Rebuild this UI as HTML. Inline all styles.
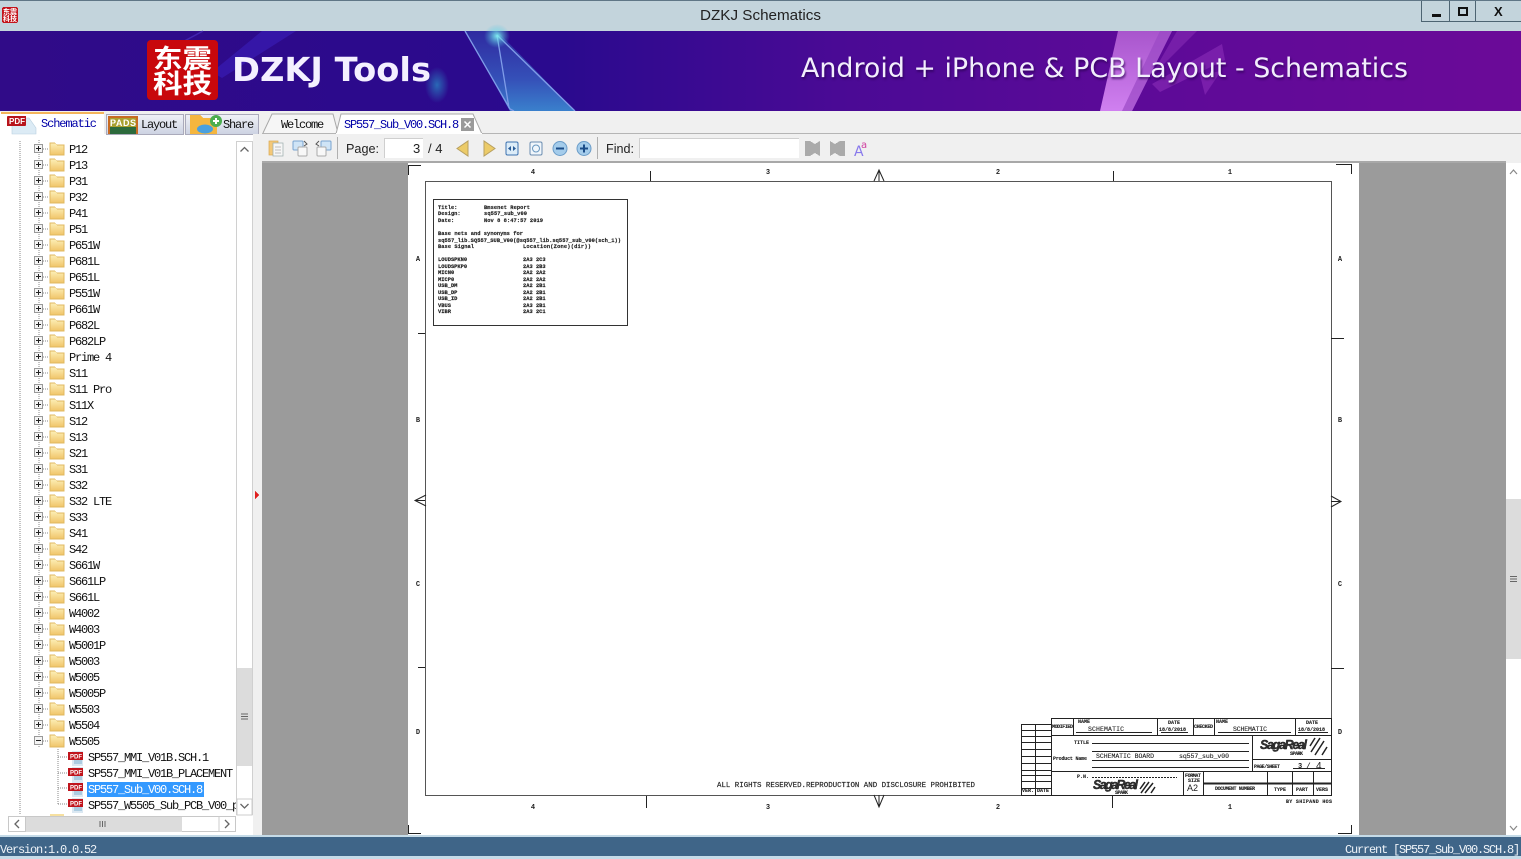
<!DOCTYPE html>
<html><head><meta charset="utf-8"><title>DZKJ Schematics</title>
<style>
html,body{margin:0;padding:0;background:#f0f0f0;overflow:hidden}
svg{display:block}
.t{font:12px "Liberation Mono","Noto Sans CJK SC",monospace;letter-spacing:-1.2px;fill:#111}
.u{font:13px "Liberation Sans",sans-serif;fill:#222}
.s{font:bold 5.4px "Liberation Mono",monospace;fill:#222;stroke:#222;stroke-width:.15}
.l{font:bold 7px "Liberation Mono",monospace;fill:#222;text-anchor:middle}
.b{font:bold 5px "Liberation Mono",monospace;fill:#222;stroke:#222;stroke-width:.1}
.n{font:6.5px "Liberation Mono",monospace;fill:#222;stroke:#222;stroke-width:.1}
.g{font:italic bold 12.5px "Liberation Sans",sans-serif;fill:#333;stroke:#111;stroke-width:.4}
</style></head><body>
<svg xmlns="http://www.w3.org/2000/svg" width="1521" height="859" viewBox="0 0 1521 859" shape-rendering="crispEdges">
<defs>
<linearGradient id="ban" x1="0" x2="1" y1="0" y2="0"><stop offset="0" stop-color="#300b88"/><stop offset=".37" stop-color="#2a0a8e"/><stop offset=".55" stop-color="#4a0a95"/><stop offset=".75" stop-color="#5d0a98"/><stop offset="1" stop-color="#6b0a98"/></linearGradient>
<linearGradient id="fo" x1="0" x2="0" y1="0" y2="1"><stop offset="0" stop-color="#fdf0b8"/><stop offset="1" stop-color="#f0c468"/></linearGradient>
<linearGradient id="tb" x1="0" x2="0" y1="0" y2="1"><stop offset="0" stop-color="#f0f2f7"/><stop offset="1" stop-color="#ccd2e2"/></linearGradient>
<linearGradient id="bl" x1="0" x2="0" y1="0" y2="1"><stop offset="0" stop-color="#2f2aa0"/><stop offset=".6" stop-color="#3550b8"/><stop offset="1" stop-color="#3a80cc"/></linearGradient>
<linearGradient id="pk" x1="0" x2="0" y1="0" y2="1"><stop offset="0" stop-color="#a855cc"/><stop offset="1" stop-color="#d080f0"/></linearGradient>
<radialGradient id="gl"><stop offset="0" stop-color="#80f0f0" stop-opacity=".95"/><stop offset="1" stop-color="#50c0e0" stop-opacity="0"/></radialGradient>
<radialGradient id="gb"><stop offset="0" stop-color="#2a80c0" stop-opacity=".8"/><stop offset="1" stop-color="#2a80c0" stop-opacity="0"/></radialGradient>
<g id="r">
<path d="M39 -9V7M43 0H49" stroke="#888" stroke-dasharray="1 1" fill="none"/>
<rect x="34.500" y="-4.500" width="8" height="8" fill="#f4f4f4" stroke="#999"/>
<path d="M36 -.5H41M38.500 -3V2" stroke="#222"/>
<path d="M50 -6h5l2 2h7v10h-14z" fill="url(#fo)" stroke="#e0b860" stroke-width=".6"/>
</g>
<g id="p">
<path d="M58 0H68" stroke="#888" stroke-dasharray="1 1"/>
<rect x="72" y="-6" width="11" height="15" fill="#dbe8f2"/>
<path d="M74 4h8M74 6h8" stroke="#7db0d0"/>
<rect x="68" y="-5" width="15" height="8" fill="#c0141c"/>
<text x="70" y="1.500" font-family="Liberation Sans" font-size="6" font-weight="bold" fill="#fff">PDF</text>
</g>
</defs>

<rect width="1521" height="859" fill="#f0f0f0"/>
<!-- title bar -->
<rect width="1521" height="31" fill="#c3d4dc"/>
<rect width="1521" height="1" fill="#5f7686"/>
<rect x="2" y="7" width="16" height="16" rx="2" fill="#c4141c"/>
<text x="3" y="14" font-family="Noto Sans CJK SC" font-size="7" fill="#fff" font-weight="bold">东震</text>
<text x="3" y="21" font-family="Noto Sans CJK SC" font-size="7" fill="#fff" font-weight="bold">科技</text>
<text x="700" y="20" font-family="Liberation Sans" font-size="15" fill="#222" textLength="121" lengthAdjust="spacingAndGlyphs">DZKJ Schematics</text>
<path d="M1421.500 1V21.500H1521M1449.500 1V21.500M1475.500 1V21.500" fill="none" stroke="#4d6472"/>
<rect x="1432" y="14" width="9" height="3" fill="#111"/>
<rect x="1459" y="8" width="8" height="7" fill="none" stroke="#111" stroke-width="2"/>
<text x="1494" y="16" font-family="Liberation Sans" font-size="13" font-weight="bold" fill="#111">X</text>

<!-- banner -->
<g shape-rendering="auto">
<rect y="31" width="1521" height="80" fill="url(#ban)"/>
<path d="M212 72L262 31H296L222 78Z" fill="#3c20c0" opacity=".55"/>
<path d="M177 45L203 31" stroke="#4a30c0" stroke-width="1.500" opacity=".7"/>
<ellipse cx="437" cy="85" rx="12" ry="18" fill="url(#gb)"/>
<path d="M465 31H497L575 111H510Z" fill="url(#bl)"/>
<path d="M465 31L510 109L514 111M497 35L575 111M497 35L509 108" stroke="#7f9ce8" stroke-width="1.300" fill="none"/>
<ellipse cx="497" cy="36" rx="13" ry="12" fill="url(#gl)"/>
<path d="M1118 31H1172L1132 111H1100Z" fill="url(#pk)"/>
<path d="M1160 31H1172L1132 111H1122Z" fill="#9a48c4" opacity=".7"/>
<path d="M1177 31H1197L1150 78Z" fill="#8a30b8" opacity=".55"/>
<path d="M1222 44L1225 60L1160 92L1152 84Z" fill="#8428b4" opacity=".7"/>
<path d="M1200 75L1221 71L1205 95Z" fill="#8a2cb8" opacity=".6"/>
<rect x="147" y="40" width="71" height="60" rx="4" fill="#c8080c"/>
<text x="153" y="68" font-family="Noto Sans CJK SC" font-size="26" font-weight="bold" fill="#fff" textLength="59" lengthAdjust="spacingAndGlyphs">东震</text>
<text x="153" y="93" font-family="Noto Sans CJK SC" font-size="26" font-weight="bold" fill="#fff" textLength="59" lengthAdjust="spacingAndGlyphs">科技</text>
<text x="232" y="81" font-family="DejaVu Sans" font-size="33" font-weight="bold" fill="#f4f0ff" textLength="199" lengthAdjust="spacingAndGlyphs">DZKJ Tools</text>
<text x="801" y="77" font-family="DejaVu Sans" font-size="27" fill="#f2eefc" textLength="607" lengthAdjust="spacingAndGlyphs" style="filter:drop-shadow(1px 2px 1px rgba(40,0,80,.7))">Android + iPhone &amp; PCB Layout - Schematics</text>
</g>

<!-- tab strip -->
<rect y="111" width="1521" height="23" fill="#f0f0f0"/>
<rect y="133" x="262" width="1259" height="1" fill="#b5b5b5"/>
<rect x="0" y="134" width="261" height="702" fill="#fff"/>
<rect x="0" y="112" width="104" height="24" fill="#fff"/>
<rect x="1" y="112" width="103" height="2" fill="#f4b45a"/>
<rect x="106.500" y="114.500" width="77" height="20" fill="url(#tb)" stroke="#aab"/>
<rect x="185.500" y="114.500" width="73" height="20" fill="url(#tb)" stroke="#aab"/>
<path d="M12 118h17l7 10v6H12z" fill="#dcebf5" stroke="#b8d0e0" stroke-width=".6" shape-rendering="auto"/>
<rect x="7" y="116" width="19" height="10" rx="1" fill="#b8141c"/>
<text x="9" y="124" font-family="Liberation Sans" font-size="8" font-weight="bold" fill="#fff">PDF</text>
<rect x="108" y="116" width="30" height="18" fill="#c86a22"/>
<rect x="110" y="118" width="26" height="16" fill="#a8a030"/>
<rect x="110" y="127" width="26" height="7" fill="#2c6a3c"/>
<text x="110" y="126" font-family="Liberation Sans" font-size="9" font-weight="bold" fill="#fff" textLength="26">PADS</text>
<path d="M190 115h10l3 3h14v16h-27z" fill="#f5b63e"/>
<ellipse cx="205" cy="129" rx="8" ry="4.500" fill="#4aa0de" shape-rendering="auto"/>
<circle cx="216" cy="121" r="6" fill="#4cae50" shape-rendering="auto"/>
<path d="M213 121h6M216 118v6" stroke="#fff" stroke-width="2"/>
<text class="t" x="41" y="127" style="fill:#0000a8;letter-spacing:-1.100px">Schematic</text>
<text class="t" x="141" y="128">Layout</text>
<text class="t" x="223" y="128">Share</text>
<g shape-rendering="auto">
<path d="M263 133L272 114H333L338 133" fill="#f6f6f6" stroke="#a8a8a8"/>
<path d="M336 134L341 114H473L482 134Z" fill="#fff" stroke="#a8a8a8"/>
</g>
<rect x="336" y="133" width="146" height="1" fill="#fff"/>
<text class="t" x="281" y="128">Welcome</text>
<text class="t" x="344" y="128" style="fill:#0000a8">SP557_Sub_V00.SCH.8</text>
<rect x="461" y="118" width="13" height="13" fill="#9a9a9a"/>
<path d="M464.500 121.500l6 6m0-6l-6 6" stroke="#fff" stroke-width="1.500" shape-rendering="auto"/>

<!-- tree -->
<path d="M20 141V815" stroke="#888" stroke-dasharray="1 1"/>
<use href="#r" y="149"/><text class="t" x="69" y="153">P12</text>
<use href="#r" y="165"/><text class="t" x="69" y="169">P13</text>
<use href="#r" y="181"/><text class="t" x="69" y="185">P31</text>
<use href="#r" y="197"/><text class="t" x="69" y="201">P32</text>
<use href="#r" y="213"/><text class="t" x="69" y="217">P41</text>
<use href="#r" y="229"/><text class="t" x="69" y="233">P51</text>
<use href="#r" y="245"/><text class="t" x="69" y="249">P651W</text>
<use href="#r" y="261"/><text class="t" x="69" y="265">P681L</text>
<use href="#r" y="277"/><text class="t" x="69" y="281">P651L</text>
<use href="#r" y="293"/><text class="t" x="69" y="297">P551W</text>
<use href="#r" y="309"/><text class="t" x="69" y="313">P661W</text>
<use href="#r" y="325"/><text class="t" x="69" y="329">P682L</text>
<use href="#r" y="341"/><text class="t" x="69" y="345">P682LP</text>
<use href="#r" y="357"/><text class="t" x="69" y="361">Prime 4</text>
<use href="#r" y="373"/><text class="t" x="69" y="377">S11</text>
<use href="#r" y="389"/><text class="t" x="69" y="393">S11 Pro</text>
<use href="#r" y="405"/><text class="t" x="69" y="409">S11X</text>
<use href="#r" y="421"/><text class="t" x="69" y="425">S12</text>
<use href="#r" y="437"/><text class="t" x="69" y="441">S13</text>
<use href="#r" y="453"/><text class="t" x="69" y="457">S21</text>
<use href="#r" y="469"/><text class="t" x="69" y="473">S31</text>
<use href="#r" y="485"/><text class="t" x="69" y="489">S32</text>
<use href="#r" y="501"/><text class="t" x="69" y="505">S32 LTE</text>
<use href="#r" y="517"/><text class="t" x="69" y="521">S33</text>
<use href="#r" y="533"/><text class="t" x="69" y="537">S41</text>
<use href="#r" y="549"/><text class="t" x="69" y="553">S42</text>
<use href="#r" y="565"/><text class="t" x="69" y="569">S661W</text>
<use href="#r" y="581"/><text class="t" x="69" y="585">S661LP</text>
<use href="#r" y="597"/><text class="t" x="69" y="601">S661L</text>
<use href="#r" y="613"/><text class="t" x="69" y="617">W4002</text>
<use href="#r" y="629"/><text class="t" x="69" y="633">W4003</text>
<use href="#r" y="645"/><text class="t" x="69" y="649">W5001P</text>
<use href="#r" y="661"/><text class="t" x="69" y="665">W5003</text>
<use href="#r" y="677"/><text class="t" x="69" y="681">W5005</text>
<use href="#r" y="693"/><text class="t" x="69" y="697">W5005P</text>
<use href="#r" y="709"/><text class="t" x="69" y="713">W5503</text>
<use href="#r" y="725"/><text class="t" x="69" y="729">W5504</text>
<use href="#r" y="741"/><text class="t" x="69" y="745">W5505</text>
<rect x="36" y="737" width="5" height="7" fill="#f4f4f4"/>
<path d="M36 740.500H41" stroke="#222"/>
<path d="M58 749V805" stroke="#888" stroke-dasharray="1 1"/>
<use href="#p" y="757"/><text class="t" x="88" y="761">SP557_MMI_V01B.SCH.1</text>
<use href="#p" y="773"/><text class="t" x="88" y="777">SP557_MMI_V01B_PLACEMENT</text>
<use href="#p" y="788"/>
<rect x="87" y="782" width="117" height="15" fill="#3399ff"/>
<text class="t" x="88" y="793" style="fill:#fff">SP557_Sub_V00.SCH.8</text>
<use href="#p" y="804"/><text class="t" x="88" y="809">SP557_W5505_Sub_PCB_V00_p</text>
<rect x="237" y="797" width="16" height="18" fill="#fff"/>
<rect x="0" y="815" width="260" height="21" fill="#fff"/>
<rect x="50" y="814" width="14" height="2" fill="#f6e0a0"/>

<!-- tree scrollbars -->
<rect x="236.500" y="141.500" width="16" height="673" fill="#f0f0f0" stroke="#d0d0d0"/>
<rect x="237" y="142" width="15" height="16" fill="#fff"/>
<rect x="237" y="158" width="15" height="510" fill="#fff"/>
<path d="M240.500 151.500l4-4 4 4" fill="none" stroke="#666" stroke-width="1.300" shape-rendering="auto"/>
<rect x="237" y="668" width="15" height="98" fill="#dcdcdc"/>
<rect x="237" y="766" width="15" height="33" fill="#fff"/>
<path d="M241 714h7M241 716.500h7M241 719h7" stroke="#666"/>
<rect x="237" y="799" width="15" height="16" fill="#fff" stroke="#ccc"/>
<path d="M240.500 804l4 4 4-4" fill="none" stroke="#666" stroke-width="1.300" shape-rendering="auto"/>
<rect x="8.500" y="816.500" width="227" height="15" fill="#fff" stroke="#c8c8c8"/>
<rect x="25" y="817" width="157" height="15" fill="#dcdcdc"/>
<path d="M19 820l-4 4 4 4M225 820l4 4-4 4" fill="none" stroke="#666" stroke-width="1.300" shape-rendering="auto"/>
<path d="M100 821v6M102.500 821v6M105 821v6" stroke="#666"/>
<rect x="218.500" y="816.500" width="1" height="15" fill="#ccc"/>
<rect x="25" y="817" width="1" height="15" fill="#c8c8c8"/>

<!-- splitter -->
<rect x="253" y="134" width="8" height="702" fill="#f0f0f0"/>
<path d="M255 491l4 4-4 4z" fill="#e02020"/>

<!-- toolbar -->
<rect x="262" y="134" width="1259" height="28" fill="#f0f0f0"/>
<g shape-rendering="auto">
<rect x="269" y="141" width="9" height="14" fill="#f4c878" stroke="#d8a850" stroke-width=".7"/>
<rect x="273" y="143" width="10" height="13" fill="#f6f6f6" stroke="#9aa" stroke-width=".7"/>
<path d="M275 147h6M275 150h6M275 153h6" stroke="#aaa" stroke-width=".7"/>
<rect x="293" y="141" width="10" height="9" rx="1" fill="#cfe4f6" stroke="#7aa4d0"/>
<rect x="298" y="147" width="9" height="9" rx="1" fill="#f8f8f8" stroke="#aaa"/>
<path d="M304 141l3 3-3 2" fill="none" stroke="#555"/>
<rect x="321" y="141" width="10" height="9" rx="1" fill="#cfe4f6" stroke="#7aa4d0"/>
<rect x="317" y="147" width="9" height="9" rx="1" fill="#f8f8f8" stroke="#aaa"/>
<path d="M319 141l-3 3 3 2" fill="none" stroke="#555"/>
</g>
<rect x="337" y="137" width="1" height="22" fill="#b0b0b0"/>
<text class="u" x="346" y="153" textLength="33" lengthAdjust="spacingAndGlyphs">Page:</text>
<rect x="384" y="138" width="39" height="20" fill="#fff"/>
<rect x="384" y="138" width="39" height="1" fill="#cfcfcf"/>
<rect x="384" y="138" width="1" height="20" fill="#cfcfcf"/>
<text class="u" x="413" y="153">3</text>
<text class="u" x="428" y="153">/ 4</text>
<g shape-rendering="auto">
<path d="M468 141V156L457 148.500Z" fill="#eccb68" stroke="#b8a060"/>
<path d="M484 141V156L495 148.500Z" fill="#eccb68" stroke="#b8a060"/>
<rect x="506" y="142" width="12" height="13" rx="1.500" fill="#dcecf8" stroke="#3c72b0"/>
<path d="M511 146l-3 2.500 3 2.500zM513 146l3 2.500-3 2.500z" fill="#2a5c98"/>
<rect x="530" y="142" width="12" height="13" rx="1.500" fill="#f0f6fb" stroke="#6a8cb0"/>
<circle cx="536" cy="148.500" r="3.500" fill="none" stroke="#6a98c0"/>
<circle cx="560" cy="148.500" r="7" fill="#a4cceb" stroke="#6a9cc8"/>
<rect x="556" y="147.500" width="8" height="2" fill="#1a4c88"/>
<circle cx="584" cy="148.500" r="7" fill="#a4cceb" stroke="#6a9cc8"/>
<path d="M580 148.500h8M584 144.500v8" stroke="#1a4c88" stroke-width="2"/>
</g>
<rect x="597" y="137" width="1" height="22" fill="#b0b0b0"/>
<text class="u" x="606" y="153" textLength="28" lengthAdjust="spacingAndGlyphs">Find:</text>
<rect x="639" y="138" width="160" height="20" fill="#fff"/>
<rect x="639" y="138" width="160" height="1" fill="#cfcfcf"/>
<rect x="639" y="138" width="1" height="20" fill="#cfcfcf"/>
<path d="M805 141h5l5 3 5-3v15l-5-3-5 3h-5z" fill="#aaa"/>
<path d="M830 141l5 3 5-3h5v15h-5l-5-3-5 3z" fill="#aaa"/>
<text x="854" y="156" font-family="DejaVu Sans" font-size="14" fill="#8878ec">A</text>
<text x="861" y="148" font-family="DejaVu Sans" font-size="10" fill="#d040a0">a</text>

<!-- viewer -->
<rect x="262" y="162" width="1244" height="673" fill="#9b9b9b"/>
<rect x="262" y="161" width="1244" height="2" fill="#a8a8a8"/>
<rect x="408" y="163" width="951" height="672" fill="#fff"/>
<rect x="1506" y="163" width="15" height="672" fill="#fff"/>
<rect x="1506" y="499" width="15" height="160" fill="#dcdcdc"/>
<path d="M1510 576.500h7M1510 579h7M1510 581.500h7" stroke="#666"/>
<path d="M1510 174l3.500-4 3.500 4M1510 826l3.500 4 3.500-4" fill="none" stroke="#888" stroke-width="1.200" shape-rendering="auto"/>

<!-- sheet -->
<g fill="none" stroke="#222">
<rect x="425.500" y="181.500" width="906" height="614" stroke="#555"/>
<path d="M408.500 175V165.500H421M1336 164.500H1351.500V174M1338 833.500H1351.500V825M408.500 825V833.500H421"/>
<path d="M650.500 171V181M1113.500 171V181M646.500 796V808M1112.500 796V808M418 333.500H425M418 667.500H425M1331 338.500H1344M1331 668.500H1344"/>
</g>
<g fill="none" stroke="#222" shape-rendering="auto">
<path d="M874 181L879 170L884 181M879 170V181"/>
<path d="M874 795L879 807L884 795M879 795V807"/>
<path d="M426 495L415 500.500L426 506M415 500.500H425"/>
<path d="M1331 496L1341 501.500L1331 507M1331 501.500H1341"/>
</g>
<text class="l" x="533" y="174">4</text><text class="l" x="768" y="174">3</text><text class="l" x="998" y="174">2</text><text class="l" x="1230" y="174">1</text>
<text class="l" x="533" y="809">4</text><text class="l" x="768" y="809">3</text><text class="l" x="998" y="809">2</text><text class="l" x="1230" y="809">1</text>
<text class="l" x="418" y="261">A</text><text class="l" x="418" y="422">B</text><text class="l" x="418" y="586">C</text><text class="l" x="418" y="734">D</text>
<text class="l" x="1340" y="261">A</text><text class="l" x="1340" y="422">B</text><text class="l" x="1340" y="586">C</text><text class="l" x="1340" y="734">D</text>

<rect x="433.500" y="199.500" width="194" height="126" fill="#fff" stroke="#333"/>
<text class="s" x="438" y="209">Title:</text><text class="s" x="484" y="209" textLength="46">Bmsenet Report</text>
<text class="s" x="438" y="215">Design:</text><text class="s" x="484" y="215" textLength="43">sq557_sub_v00</text>
<text class="s" x="438" y="222">Date:</text><text class="s" x="484" y="222" textLength="59">Nov 8 8:47:57 2019</text>
<text class="s" x="438" y="235" textLength="85">Base nets and synonyms for</text>
<text class="s" x="438" y="242" textLength="183">sq557_lib.SQ557_SUB_V00(@sq557_lib.sq557_sub_v00(sch_1))</text>
<text class="s" x="438" y="248" textLength="36">Base Signal</text><text class="s" x="523" y="248" textLength="68">Location(Zone)(dir))</text>
<text class="s" x="438" y="261">LOUDSPKN0</text><text class="s" x="523" y="261">2A3 2C3</text>
<text class="s" x="438" y="268">LOUDSPKP0</text><text class="s" x="523" y="268">2A3 2B3</text>
<text class="s" x="438" y="274">MICN0</text><text class="s" x="523" y="274">2A2 2A2</text>
<text class="s" x="438" y="281">MICP0</text><text class="s" x="523" y="281">2A2 2A2</text>
<text class="s" x="438" y="287">USB_DM</text><text class="s" x="523" y="287">2A2 2B1</text>
<text class="s" x="438" y="294">USB_DP</text><text class="s" x="523" y="294">2A2 2B1</text>
<text class="s" x="438" y="300">USB_ID</text><text class="s" x="523" y="300">2A2 2B1</text>
<text class="s" x="438" y="307">VBUS</text><text class="s" x="523" y="307">2A3 2B1</text>
<text class="s" x="438" y="313">VIBR</text><text class="s" x="523" y="313">2A3 2C1</text>

<text x="717" y="787" font-family="Liberation Mono" font-size="7" fill="#222" stroke="#222" stroke-width=".15" textLength="258" lengthAdjust="spacingAndGlyphs">ALL RIGHTS RESERVED.REPRODUCTION AND DISCLOSURE PROHIBITED</text>

<!-- title block -->
<g fill="none" stroke="#222">
<path d="M1051.500 718.500H1331.500V795.500H1021M1021 724.500H1051M1021.500 724.500V795M1035.500 724.500V795M1051.500 718V795"/>
<path d="M1021 730.500H1051M1021 736.500H1051M1021 742.500H1051M1021 749.500H1051M1021 756.500H1051M1021 763.500H1051M1021 770.500H1051M1021 775.500H1051M1021 781.500H1051M1021 788.500H1051"/>
<path d="M1051 735.500H1331M1073.500 718V735M1157.500 718V735M1193.500 718V735M1214.500 718V735M1295.500 718V735"/>
<path d="M1252.500 735V771M1252 759.500H1331M1051 771.500H1331M1183.500 771V795M1203.500 771V795M1267.500 771V795M1292.500 771V795M1313.500 771V795"/>
<path d="M1203 783.500H1331" stroke-width="2"/>
<path d="M1076 732.500H1152M1161 732.500H1188M1218 732.500H1291M1298 732.500H1328"/>
<path d="M1092 743.500H1249M1092 751.500H1249M1092 760.500H1249M1092 767.500H1249"/>
<path d="M1092 777.500H1177" stroke-dasharray="2 1"/>
<path d="M1293 768.500H1325"/>
</g>
<text class="b" x="1052" y="728" textLength="21">MODIFIED</text>
<text class="b" x="1078" y="723">NAME</text>
<text class="n" x="1088" y="731" textLength="36">SCHEMATIC</text>
<text class="b" x="1168" y="724">DATE</text>
<text class="b" x="1159" y="731">18/8/2018</text>
<text class="b" x="1194" y="728" textLength="19">CHECKED</text>
<text class="b" x="1216" y="723">NAME</text>
<text class="n" x="1233" y="731" textLength="34">SCHEMATIC</text>
<text class="b" x="1306" y="724">DATE</text>
<text class="b" x="1298" y="731">18/8/2018</text>
<text class="b" x="1074" y="744">TITLE</text>
<text class="b" x="1053" y="760" textLength="34">Product Name</text>
<text class="n" x="1096" y="758" textLength="58">SCHEMATIC BOARD</text>
<text class="n" x="1179" y="758" textLength="50">sq557_sub_v00</text>
<text class="b" x="1254" y="768" textLength="26">PAGE/SHEET</text>
<text x="1298" y="768" font-family="Liberation Mono" font-size="7" fill="#222" font-weight="bold">3 /</text>
<text x="1316" y="769" font-family="Liberation Sans" font-size="10" fill="#222">4</text>
<text class="b" x="1077" y="778">P.N.</text>
<text class="g" x="1260" y="749" textLength="47">SagaReal</text>
<text class="b" x="1290" y="755" textLength="13">SPARK</text>
<path d="M1315 738l-5 8M1320 738l-9 14M1324 741l-9 14M1327 747l-5 8" stroke="#222" stroke-width="1.500" fill="none" shape-rendering="auto"/>
<text class="g" x="1093" y="789" textLength="45">SagaReal</text>
<text class="b" x="1115" y="794" textLength="13">SPARK</text>
<path d="M1145 782l-5 7M1149 782l-8 11M1153 783l-8 10M1155 787l-4 6" stroke="#222" stroke-width="1.500" fill="none" shape-rendering="auto"/>
<text class="b" x="1185" y="777" textLength="16">FORMAT</text>
<text class="b" x="1188" y="782">SIZE</text>
<text x="1187" y="791" font-family="Liberation Sans" font-size="9" fill="#222">A2</text>
<text class="b" x="1215" y="790" textLength="40">DOCUMENT NUMBER</text>
<text class="b" x="1274" y="791">TYPE</text>
<text class="b" x="1296" y="791">PART</text>
<text class="b" x="1316" y="791">VERS</text>
<text class="b" x="1022" y="792">VER.</text>
<text class="b" x="1037" y="792">DATE</text>
<text class="b" x="1286" y="803" textLength="46">BY SHIPAND HOS</text>

<!-- status -->
<rect y="835" width="1521" height="24" fill="#c5dbe8"/>
<rect y="837" width="1521" height="19" fill="#3f6588"/>
<text class="t" x="0" y="853" style="fill:#eef3f8">Version:1.0.0.52</text>
<text class="t" x="1345" y="853" style="fill:#eef3f8">Current [SP557_Sub_V00.SCH.8]</text>
</svg>
</body></html>
